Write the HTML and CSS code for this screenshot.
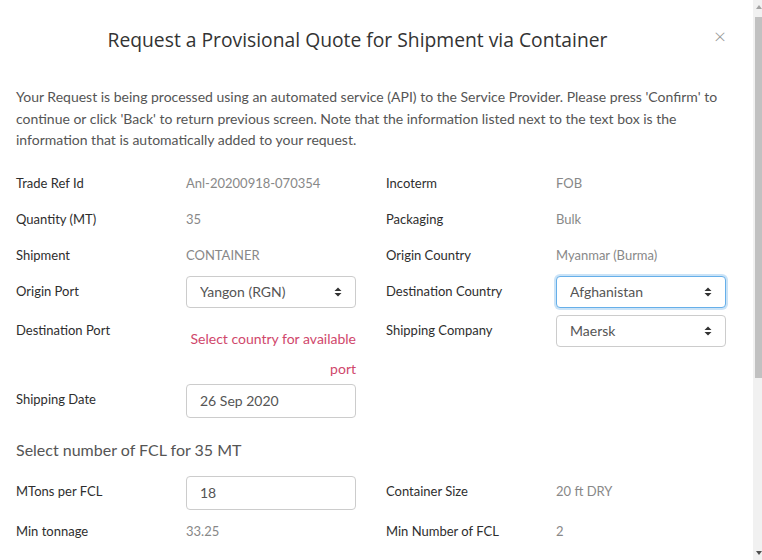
FILE: index.html
```html
<!DOCTYPE html>
<html lang="en">
<head>
<meta charset="utf-8">
<title>Request a Provisional Quote</title>
<link rel="stylesheet" href="styles.css">
</head>
<body>
<div class="modal">
  <header class="modal-header">
    <h4 class="modal-title">Request a Provisional Quote for Shipment via Container</h4>
    <button class="close" type="button" aria-label="Close">×</button>
  </header>
  <div class="modal-body">
    <p class="intro">Your Request is being processed using an automated service (API) to the Service Provider. Please press 'Confirm' to continue or click 'Back' to return previous screen. Note that the information listed next to the text box is the information that is automatically added to your request.</p>

    <div class="row">
      <div class="pair"><div class="label">Trade Ref Id</div><div class="value">Anl-20200918-070354</div></div>
      <div class="pair"><div class="label">Incoterm</div><div class="value">FOB</div></div>
    </div>
    <div class="row">
      <div class="pair"><div class="label">Quantity (MT)</div><div class="value">35</div></div>
      <div class="pair"><div class="label">Packaging</div><div class="value">Bulk</div></div>
    </div>
    <div class="row">
      <div class="pair"><div class="label">Shipment</div><div class="value">CONTAINER</div></div>
      <div class="pair"><div class="label">Origin Country</div><div class="value">Myanmar (Burma)</div></div>
    </div>
    <div class="row row-select">
      <div class="pair"><div class="label">Origin Port</div>
        <div class="control">
          <select class="select"><option>Yangon (RGN)</option></select>
          <svg class="caret" width="8" height="10" viewBox="0 0 8 10"><path d="M4 0.5 L7.5 4 L0.5 4 Z M0.5 6 L7.5 6 L4 9.5 Z" fill="#333"/></svg>
        </div>
      </div>
      <div class="pair"><div class="label">Destination Country</div>
        <div class="control">
          <select class="select focus"><option>Afghanistan</option></select>
          <svg class="caret" width="8" height="10" viewBox="0 0 8 10"><path d="M4 0.5 L7.5 4 L0.5 4 Z M0.5 6 L7.5 6 L4 9.5 Z" fill="#333"/></svg>
        </div>
      </div>
    </div>
    <div class="row row-port">
      <div class="pair"><div class="label">Destination Port</div>
        <div class="value warn">Select country for available port</div>
      </div>
      <div class="pair"><div class="label">Shipping Company</div>
        <div class="control">
          <select class="select"><option>Maersk</option></select>
          <svg class="caret" width="8" height="10" viewBox="0 0 8 10"><path d="M4 0.5 L7.5 4 L0.5 4 Z M0.5 6 L7.5 6 L4 9.5 Z" fill="#333"/></svg>
        </div>
      </div>
    </div>
    <div class="row row-input">
      <div class="pair"><div class="label">Shipping Date</div>
        <div class="control"><input class="input" type="text" value="26 Sep 2020"></div>
      </div>
    </div>

    <h5 class="section-title">Select number of FCL for 35 MT</h5>

    <div class="row row-input">
      <div class="pair"><div class="label">MTons per FCL</div>
        <div class="control"><input class="input" type="text" value="18"></div>
      </div>
      <div class="pair"><div class="label">Container Size</div><div class="value">20 ft DRY</div></div>
    </div>
    <div class="row">
      <div class="pair"><div class="label">Min tonnage</div><div class="value">33.25</div></div>
      <div class="pair"><div class="label">Min Number of FCL</div><div class="value">2</div></div>
    </div>
  </div>
</div>

<div class="scrollbar" aria-hidden="true">
  <span class="arrow-up"></span>
  <span class="thumb"></span>
  <span class="arrow-down"></span>
</div>
</body>
</html>
```

FILE: styles.css
```css
* { box-sizing: border-box; }
html, body { margin: 0; padding: 0; background: #fff; }
body {
  font-family: "Lato", "Liberation Sans", sans-serif;
  font-size: 14px;
  color: #333;
  overflow: hidden;
  height: 560px;
}

.modal { width: 753px; }

.modal-header {
  display: flex;
  align-items: center;
  padding: 27px 16px 0 16px;
  position: relative;
}
.modal-title {
  flex: 1;
  margin: 0;
  text-align: center;
  font-family: "Open Sans", sans-serif;
  font-weight: 400;
  font-size: 19.3px;
  line-height: 26px;
  color: #333;
  padding-right: 38px;
}
.close {
  position: absolute;
  right: 27px;
  top: 24px;
  border: 0;
  background: none;
  padding: 0;
  font-family: "Open Sans", sans-serif;
  font-size: 21px;
  line-height: 24px;
  color: #999;
  font-weight: 300;
}

.modal-body { padding: 33px 16px 0 16px; }

.intro {
  margin: 0 0 17px 0;
  line-height: 21.5px;
  color: #555;
  font-size: 14px;
}

.row {
  display: flex;
  gap: 30px;
  margin-bottom: 6px;
}
.pair { display: flex; width: 340px; }
.label, .value {
  width: 170px;
  padding: 5px 0;
  line-height: 20px;
}
.label { color: #2e2e2e; font-size: 13px; }
.value { color: #888; font-size: 13px; }

.control { width: 170px; position: relative; }
.select, .input {
  width: 170px;
  border: 1px solid #ccc;
  border-radius: 4px;
  background: #fff;
  font-family: inherit;
  font-size: 14px;
  color: #555;
  padding: 0 13px;
  outline: none;
  margin: 0;
  display: block;
}
.select {
  -webkit-appearance: none;
  appearance: none;
  height: 32px;
  padding-bottom: 1px;
}
.select.focus {
  border-color: #66afe9;
  box-shadow: 0 0 0 2px rgba(102, 175, 233, 0.35);
}
.input { height: 34px; }
.caret {
  position: absolute;
  right: 14px;
  top: 11px;
  pointer-events: none;
}

.row-select { margin-bottom: 7px; }
.row-port { margin-bottom: 0; }
.warn {
  color: #d0476b;
  text-align: right;
  line-height: 30px;
  padding: 9px 0 0 0;
  font-size: 14px;
}

.section-title {
  margin: 21px 0 15px 0;
  font-size: 16px;
  line-height: 22px;
  font-weight: 400;
  color: #555;
}

.scrollbar {
  position: fixed;
  top: 0;
  right: 0;
  width: 9px;
  height: 560px;
  background: #f1f1f1;
}
.thumb {
  position: absolute;
  left: 2px;
  top: 17px;
  width: 7px;
  height: 361px;
  background: #c1c1c1;
}
.arrow-up, .arrow-down {
  position: absolute;
  left: 3px;
  width: 0;
  height: 0;
  border-left: 3px solid transparent;
  border-right: 3px solid transparent;
}
.arrow-up { top: 5px; border-bottom: 4px solid #a3a3a3; }
.arrow-down { bottom: 5px; border-top: 4px solid #505050; }
```
